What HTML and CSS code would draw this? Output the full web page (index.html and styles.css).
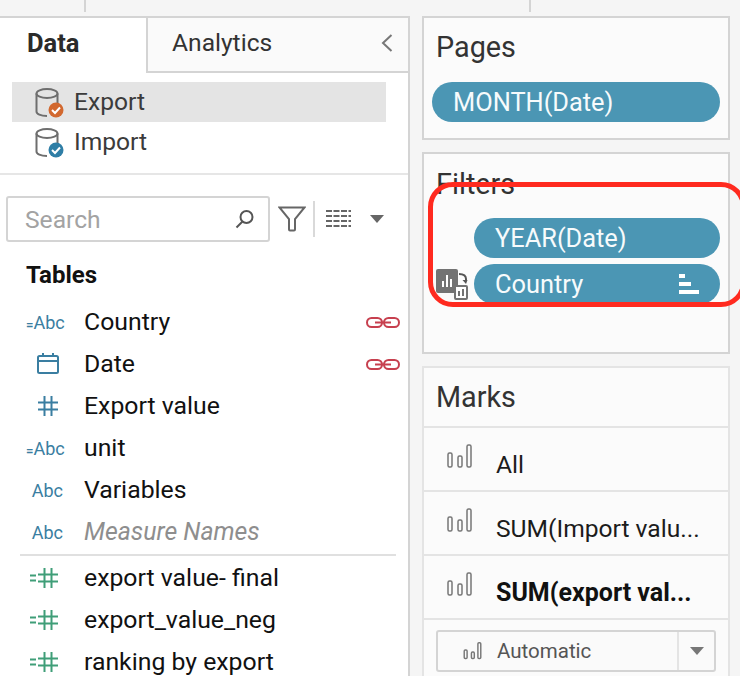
FILE: index.html
```html
<!DOCTYPE html>
<html lang="en">
<head>
    <meta charset="UTF-8">
    <title>Data pane</title>
    <link rel="stylesheet" href="styles.css">
</head>
<body>
    <div class="top-strip">
        <span class="tick tick-left"></span>
        <span class="tick tick-right"></span>
    </div>

    <div class="workspace">
        <section class="data-pane">
            <div class="tabs">
                <div class="tab tab-active">Data</div>
                <div class="tab tab-other">
                    <span>Analytics</span>
                    <svg class="chevron" width="12" height="20" viewBox="0 0 12 20"><path d="M10.500 2 2 10l8.500 8" fill="none" stroke="#777" stroke-width="2"/></svg>
                </div>
            </div>

            <div class="sources">
                <div class="source source-selected">
                    <svg width="30" height="32" viewBox="0 0 30 32">
                        <ellipse cx="12" cy="7.500" rx="10.500" ry="4.500" fill="none" stroke="#6e6e6e" stroke-width="2"/>
                        <path d="M1.500 7.500v18c0 2.500 4 4.500 10.500 4.500M22.500 7.500v11" fill="none" stroke="#6e6e6e" stroke-width="2"/>
                        <circle cx="21" cy="24" r="7.500" fill="#d2682f"/>
                        <path d="m17 24 3 3 5-5.500" fill="none" stroke="#fff" stroke-width="2"/>
                    </svg>
                    <span>Export</span>
                </div>
                <div class="source">
                    <svg width="30" height="32" viewBox="0 0 30 32">
                        <ellipse cx="12" cy="7.500" rx="10.500" ry="4.500" fill="none" stroke="#6e6e6e" stroke-width="2"/>
                        <path d="M1.500 7.500v18c0 2.500 4 4.500 10.500 4.500M22.500 7.500v11" fill="none" stroke="#6e6e6e" stroke-width="2"/>
                        <circle cx="21" cy="24" r="7.500" fill="#2f7ea6"/>
                        <path d="m17 24 3 3 5-5.500" fill="none" stroke="#fff" stroke-width="2"/>
                    </svg>
                    <span>Import</span>
                </div>
            </div>

            <div class="search-row">
                <div class="search-box">
                    <span>Search</span>
                    <svg width="20" height="20" viewBox="0 0 20 20"><circle cx="11.500" cy="8" r="6" fill="none" stroke="#555" stroke-width="2"/><path d="M7.500 12.500 1.500 18.500" stroke="#555" stroke-width="2"/></svg>
                </div>
                <svg class="funnel" width="28" height="26" viewBox="0 0 28 26"><path d="M1.500 1.500h25L17 13v10.500q0 1-1 1h-4q-1 0-1-1V13z" fill="none" stroke="#666" stroke-width="2"/></svg>
                <span class="tool-divider"></span>
                <svg class="list-icon" width="25" height="20" viewBox="0 0 25 20">
                    <path d="M0 2h25M0 7h25M0 12h25M0 17h25" stroke="#666" stroke-width="2" stroke-dasharray="6 1.500"/>
                </svg>
                <span class="caret caret-dark"></span>
            </div>

            <h2 class="tables-title">Tables</h2>

            <div class="field">
                <span class="abc"><span class="eq">=</span>Abc</span><span class="field-name">Country</span>
                <svg class="link" width="34" height="11" viewBox="0 0 34 11"><rect x="1" y="1" width="15" height="9" rx="4.500" fill="none" stroke="#c7404f" stroke-width="2"/><rect x="18" y="1" width="15" height="9" rx="4.500" fill="none" stroke="#c7404f" stroke-width="2"/><path d="M9 5.500h16" stroke="#c7404f" stroke-width="2"/></svg>
            </div>
            <div class="field">
                <svg class="field-icon" width="37" height="24" viewBox="0 0 37 24"><rect x="12" y="4" width="20" height="17" rx="1.500" fill="none" stroke="#3a7ea1" stroke-width="2"/><path d="M12 9h20M17 1v4M27 1v4" stroke="#3a7ea1" stroke-width="2"/></svg>
                <span class="field-name">Date</span>
                <svg class="link" width="34" height="11" viewBox="0 0 34 11"><rect x="1" y="1" width="15" height="9" rx="4.500" fill="none" stroke="#c7404f" stroke-width="2"/><rect x="18" y="1" width="15" height="9" rx="4.500" fill="none" stroke="#c7404f" stroke-width="2"/><path d="M9 5.500h16" stroke="#c7404f" stroke-width="2"/></svg>
            </div>
            <div class="field">
                <svg class="field-icon" width="37" height="24" viewBox="0 0 37 24"><path d="M12 8.500h20M12 15.500h20M18.500 2v20M25.500 2v20" stroke="#3a7ea1" stroke-width="2"/></svg>
                <span class="field-name">Export value</span>
            </div>
            <div class="field">
                <span class="abc"><span class="eq">=</span>Abc</span><span class="field-name">unit</span>
            </div>
            <div class="field">
                <span class="abc">Abc</span><span class="field-name">Variables</span>
            </div>
            <div class="field">
                <span class="abc">Abc</span><span class="field-name field-muted">Measure Names</span>
            </div>

            <div class="measures-line"></div>

            <div class="field">
                <svg class="field-icon" width="37" height="24" viewBox="0 0 37 24"><path d="M12 8.500h20M12 15.500h20M18.500 2v20M25.500 2v20" stroke="#3f9e78" stroke-width="2"/><path d="M4 9.500h6M4 14.500h6" stroke="#3f9e78" stroke-width="2"/></svg>
                <span class="field-name">export value- final</span>
            </div>
            <div class="field">
                <svg class="field-icon" width="37" height="24" viewBox="0 0 37 24"><path d="M12 8.500h20M12 15.500h20M18.500 2v20M25.500 2v20" stroke="#3f9e78" stroke-width="2"/><path d="M4 9.500h6M4 14.500h6" stroke="#3f9e78" stroke-width="2"/></svg>
                <span class="field-name">export_value_neg</span>
            </div>
            <div class="field">
                <svg class="field-icon" width="37" height="24" viewBox="0 0 37 24"><path d="M12 8.500h20M12 15.500h20M18.500 2v20M25.500 2v20" stroke="#3f9e78" stroke-width="2"/><path d="M4 9.500h6M4 14.500h6" stroke="#3f9e78" stroke-width="2"/></svg>
                <span class="field-name">ranking by export</span>
            </div>
        </section>

        <div class="shelves">
            <section class="card card-pages">
                <h3 class="card-title">Pages</h3>
                <div class="pill pill-wide">MONTH(Date)</div>
            </section>

            <section class="card card-filters">
                <h3 class="card-title">Filters</h3>
                <div class="filter-pills">
                    <div class="filter-row">
                        <div class="pill">YEAR(Date)</div>
                    </div>
                    <div class="filter-row">
                        <svg class="swap-icon" width="32" height="31" viewBox="0 0 32 31">
                            <rect x="0" y="0" width="22" height="24" rx="2" fill="#737373"/>
                            <path d="M7 18v-6M11 18V6M15 18v-8" stroke="#fff" stroke-width="2"/>
                            <path d="M23 5q7 0 7 5v2" fill="none" stroke="#555" stroke-width="2"/>
                            <path d="m26.500 11 3.500 4 1.500-4z" fill="#555"/>
                            <rect x="19" y="17" width="12" height="13" rx="1" fill="#fff" stroke="#737373" stroke-width="2"/>
                            <path d="M23 27v-5M27 27v-7" stroke="#737373" stroke-width="2"/>
                        </svg>
                        <div class="pill pill-sorted">
                            <span>Country</span>
                            <svg width="20" height="20" viewBox="0 0 20 20"><path d="M0 0h6v4H0zM0 8h12v4H0zM0 16h20v4H0z" fill="#fff"/></svg>
                        </div>
                    </div>
                </div>
            </section>

            <section class="card card-marks">
                <h3 class="card-title marks-title">Marks</h3>
                <div class="mark-row">
                    <svg class="bars" width="25" height="25" viewBox="0 0 25 25"><g fill="none" stroke="#777" stroke-width="1.500"><rect x="1" y="9" width="4" height="14" rx="1.500"/><rect x="11" y="12" width="4" height="11" rx="1.500"/><rect x="20" y="1" width="4" height="22" rx="1.500"/></g></svg>
                    <span>All</span>
                </div>
                <div class="mark-row">
                    <svg class="bars" width="25" height="25" viewBox="0 0 25 25"><g fill="none" stroke="#777" stroke-width="1.500"><rect x="1" y="9" width="4" height="14" rx="1.500"/><rect x="11" y="12" width="4" height="11" rx="1.500"/><rect x="20" y="1" width="4" height="22" rx="1.500"/></g></svg>
                    <span>SUM(Import valu...</span>
                </div>
                <div class="mark-row mark-bold">
                    <svg class="bars" width="25" height="25" viewBox="0 0 25 25"><g fill="none" stroke="#777" stroke-width="1.500"><rect x="1" y="9" width="4" height="14" rx="1.500"/><rect x="11" y="12" width="4" height="11" rx="1.500"/><rect x="20" y="1" width="4" height="22" rx="1.500"/></g></svg>
                    <span>SUM(export val...</span>
                </div>
                <div class="mark-type">
                    <div class="mark-select">
                        <svg width="19" height="18" viewBox="0 0 25 25"><g fill="none" stroke="#777" stroke-width="2"><rect x="1" y="11" width="4" height="12" rx="1.500"/><rect x="11" y="14" width="4" height="9" rx="1.500"/><rect x="20" y="1" width="4" height="22" rx="1.500"/></g></svg>
                        <span>Automatic</span>
                    </div>
                    <div class="mark-caret"><span class="caret"></span></div>
                </div>
            </section>
        </div>
    </div>

    <div class="highlight"></div>
</body>
</html>
```

FILE: styles.css
```css
body {
    margin: 0;
    width: 740px;
    height: 676px;
    overflow: hidden;
    position: relative;
    background-color: #f5f5f5;
    color: #1c1c1c;
    font-family: Roboto, "Liberation Sans", sans-serif;
    font-size: 24.600px;
}
h2, h3 {
    margin: 0;
    font-weight: normal;
}

/* top strip with the two cut-off separators */
.top-strip {
    height: 16px;
    display: flex;
    align-items: flex-start;
}
.tick {
    width: 2px;
    height: 12px;
    background-color: #d4d4d4;
}
.tick-left {
    margin-left: 84px;
}
.tick-right {
    margin-left: 443px;
}

.workspace {
    display: flex;
    gap: 12px;
}

/* left pane */
.data-pane {
    width: 408px;
    height: 660px;
    border-top: 2px solid #d4d4d4;
    border-right: 2px solid #d4d4d4;
    background-color: #fff;
}
.tabs {
    display: flex;
    height: 55px;
}
.tab {
    display: flex;
    align-items: center;
    box-sizing: border-box;
}
.tab-active {
    width: 146px;
    padding: 0 0 6px 27px;
    font-size: 25.500px;
    font-weight: 700;
    color: #2b2b2b;
}
.tab-other {
    flex: 1;
    justify-content: space-between;
    padding: 0 15px 4px 24px;
    background-color: #fafafa;
    border-left: 2px solid #d4d4d4;
    border-bottom: 2px solid #d4d4d4;
    color: #333;
}
.sources {
    margin: 9px 22px 0 12px;
    padding-bottom: 11px;
}
.source {
    height: 40px;
    display: flex;
    align-items: center;
    gap: 9px;
    padding-left: 23px;
    color: #3b3b3b;
}
.source span {
    margin-bottom: 2px;
}
.source-selected {
    background-color: #e4e4e4;
}
.search-row {
    border-top: 2px solid #e6e6e6;
    padding: 21px 0 0 6px;
    display: flex;
    align-items: center;
}
.search-box {
    width: 264px;
    height: 46px;
    box-sizing: border-box;
    border: 2px solid #d4d4d4;
    border-radius: 3px;
    padding: 0 13px 0 17px;
    display: flex;
    align-items: center;
    justify-content: space-between;
    color: #a3a3a3;
}
.funnel {
    margin-left: 8px;
}
.tool-divider {
    width: 2px;
    height: 36px;
    margin-left: 7px;
    background-color: #d9d9d9;
}
.list-icon {
    margin-left: 11px;
}
.caret {
    display: inline-block;
    width: 0;
    height: 0;
    border-left: 7px solid transparent;
    border-right: 7px solid transparent;
    border-top: 8px solid #777;
}
.caret-dark {
    margin-left: 19px;
    border-top-color: #666;
}
.tables-title {
    margin: 18px 0 0 26px;
    height: 30px;
    line-height: 30px;
    font-size: 24px;
    font-weight: 700;
    color: #111;
}
.field {
    height: 42px;
    display: flex;
    align-items: center;
    padding: 0 8px 0 26px;
    font-size: 24.800px;
    color: #111;
}
.tables-title + .field {
    margin-top: 11px;
}
.abc {
    width: 37px;
    text-align: right;
    white-space: nowrap;
    font-size: 18px;
    color: #3a7ea1;
}
.eq {
    font-size: 13px;
    font-weight: 700;
}
.field-icon {
    flex: none;
}
.field-name {
    margin-left: 21px;
    margin-bottom: 2px;
}
.field-muted {
    font-style: italic;
    color: #8e8e8e;
}
.link {
    margin-left: auto;
}
.measures-line {
    height: 2px;
    margin: 1px 12px 1px 20px;
    background-color: #e0e0e0;
}

/* right column */
.shelves {
    width: 308px;
    display: flex;
    flex-direction: column;
    gap: 12px;
}
.card {
    box-sizing: border-box;
    background-color: #fbfbfb;
    border: 2px solid #d4d4d4;
}
.card-pages {
    height: 124px;
    padding: 0 8px;
}
.card-filters {
    height: 202px;
    padding: 0 8px;
}
.card-marks {
    height: 320px;
    margin-bottom: -10px;
    border-width: 2px 2px 0;
    border-color: #e4e4e4;
}
.card-title {
    height: 60px;
    line-height: 59px;
    padding-left: 4px;
    color: #333;
}
.card-filters .card-title {
    line-height: 60px;
}
.pill {
    height: 40px;
    box-sizing: border-box;
    padding: 0 21px;
    flex: 1;
    display: flex;
    align-items: center;
    border-radius: 20px;
    background-color: #4b96b4;
    color: #f7fbfc;
    font-size: 25.400px;
}
.pill-wide {
    width: 288px;
    margin-top: 4px;
}
.pill-sorted {
    justify-content: space-between;
}
.filter-pills {
    display: flex;
    flex-direction: column;
    gap: 6px;
    margin-top: 4px;
}
.filter-row {
    display: flex;
    align-items: center;
    padding-left: 42px;
    position: relative;
}
.swap-icon {
    position: absolute;
    left: 4px;
    top: 5px;
}
.marks-title {
    height: 58px;
    padding-left: 12px;
    border-bottom: 2px solid #e4e4e4;
}
.card-marks .marks-title {
    line-height: 58px;
}
.mark-row {
    height: 64px;
    box-sizing: border-box;
    display: flex;
    align-items: center;
    gap: 24px;
    padding: 0 0 0 23px;
    border-bottom: 2px solid #e4e4e4;
    color: #1c1c1c;
}
.mark-row span {
    margin-top: 10px;
}
.mark-row .bars {
    margin-top: -6px;
}
.mark-bold {
    font-size: 25px;
    font-weight: 700;
    color: #111;
}
.mark-type {
    width: 280px;
    height: 42px;
    box-sizing: border-box;
    margin: 10px 0 0 12px;
    display: flex;
    border: 2px solid #d4d4d4;
    border-radius: 3px;
    background-color: #fafafa;
}
.mark-select {
    flex: 1;
    display: flex;
    align-items: center;
    gap: 15px;
    padding-left: 25px;
    font-size: 20.500px;
    color: #555;
}
.mark-caret {
    width: 35px;
    display: flex;
    align-items: center;
    justify-content: center;
    border-left: 2px solid #e4e4e4;
}

/* annotation drawn over the screenshot */
.highlight {
    position: absolute;
    left: 428px;
    top: 182px;
    width: 318px;
    height: 125px;
    box-sizing: border-box;
    border: 5px solid #ff2a1f;
    border-radius: 25px;
}
```
